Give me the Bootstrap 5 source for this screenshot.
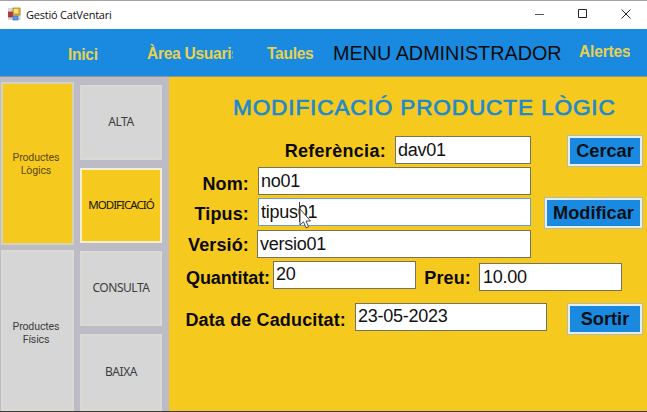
<!DOCTYPE html>
<html lang="ca">
<head>
<meta charset="utf-8">
<meta name="viewport" content="width=device-width, initial-scale=1">
<title>Gestió CatVentari</title>
<link href="https://cdn.jsdelivr.net/npm/bootstrap@5.3.0/dist/css/bootstrap.min.css" rel="stylesheet">
<style>
:root{--blue:#198ae0;--gold:#f6c91f;--side:#bdbbc6;--grey:#d6d6d6}
body{width:647px;height:412px;overflow:hidden;font-family:"Liberation Sans",Arial,sans-serif;background:var(--gold);color:#0b0a08}
.titlebar{height:29px;border-top:1px solid #a5a3a6;background:#fff;font:11px/27px "Open Sans","Noto Sans",sans-serif;color:#111}
.app-name{margin-left:5px;width:200px;letter-spacing:-.22px}
.topmenu{height:48px;background:var(--blue);border-bottom:1px solid #8b9598}
.topmenu a{color:#e6d150;font-weight:700;font-size:15.6px;line-height:20px;letter-spacing:-.3px;text-decoration:none;white-space:nowrap;overflow:hidden}
.m-inici{margin:16px 0 0 68px;width:79px}
.m-area{margin-top:15px;width:86px}
.m-taules{margin:15px 0 0 34px;width:66px}
.m-title{margin-top:12px;width:246px;font-size:19.8px;line-height:24px;white-space:nowrap}
.topmenu .m-alertes{margin-top:13px;letter-spacing:-.2px}
.workspace{height:334px}
.sidebar{width:169px;background:var(--side);padding:5px 0 0 1px}
.side-btn{border:2px solid #dad9d3;border-radius:0;background:var(--grey);color:#3c3c3c;padding:0}
.side-btn.active-tile{background:var(--gold)}
.big-tile{width:73px;font:10.6px/12.5px Roboto,sans-serif;letter-spacing:-.15px;padding:2px 3px 0 0}
.h2t.big-tile{padding-top:6px}
.big-tile.active-tile{color:#5a4a12;border-color:#d5d3b8}
.small-tile{width:82px;font:12px/16px "Noto Sans",sans-serif;letter-spacing:-.45px;padding-bottom:2px}
.small-tile.active-tile{border:2px solid #f4efcf;color:#17140a;font-size:11.5px;letter-spacing:-.95px}
.h1t{height:163px}.h2t{height:161px}.h3t{height:75px}.h4t{height:77px}
.gap-a{margin-top:5px}.gap-b{margin-top:8px}
.tile-col{margin-right:7px;padding-top:3px}
.form-area{width:478px;background:var(--gold)}
.page-title{margin:17px 0 0 64px;height:42px;font-size:22.6px;line-height:27px;letter-spacing:.86px;font-weight:400;color:#2189cb;-webkit-text-stroke:.7px #2189cb;white-space:nowrap}
.frm-row label{font-size:18px;line-height:20px;letter-spacing:.14px;font-weight:700;white-space:nowrap;text-align:right}
.frm-row .l-ref{letter-spacing:.3px}.frm-row .l-q{letter-spacing:-.1px}
.form-control,.form-control:focus{border:1px solid #77725c;border-radius:0;padding:0 0 0 2px;height:28px;font-size:18px;letter-spacing:-.25px;line-height:24px;color:#111;background:#fff;box-shadow:none;flex:none}
.form-control.editing{border-color:#6a9fd0}
.act-btn{height:32px;border-radius:0;border:3px solid #e6eef2;outline:1px solid #b5bba8;outline-offset:-1px;background:var(--blue);font-size:18.2px;font-weight:700;line-height:22px;padding:0;color:#0a1015;width:76px;flex:none}
.act-ref{margin-top:-1px}
.act-wide{width:99px}
.r31{height:31px}.r32{height:32px}.r42{height:42px}
.t5{margin-top:5px}.t6{margin-top:6px}.t7{margin-top:7px}
.l-std{width:80px}.l-ref{width:217px}.l-q{width:101px}.l-p{width:55px}.l-d{width:177px}
.i-ref{width:136px;margin-left:9px}.i-std{width:273px;margin-left:9px}
.i-ver{width:274px;margin-left:8px}.i-q{width:143px;margin-left:3px}.i-p{width:143px;margin:2px 0 0 8px}.i-d{width:192px;margin-left:9px}
.form-control.i-q,.form-control.i-d{padding-bottom:1px}
.form-control.i-p{padding-left:3px}
.caret-mark{left:299px;top:202px;width:1px;height:20px;background:#444}
.pointer{left:299px;top:208px}
.taskline{height:1px;background:#3d3b36}
</style>
<script src="https://cdn.jsdelivr.net/npm/bootstrap@5.3.0/dist/js/bootstrap.bundle.min.js"></script>
</head>
<body class="position-relative">
<header class="titlebar d-flex">
  <svg class="ms-2 flex-shrink-0" width="13" height="20" viewBox="0 -4 13 20">
    <rect x="0" y="3" width="12.500" height="12" fill="#d5d6da"/>
    <rect x="5" y="3" width="7" height="7" fill="#e9b92c" stroke="#a98335" stroke-width=".8"/>
    <rect x="6" y="4" width="4" height="4" fill="#ffe27a"/>
    <rect x=".4" y="7" width="4" height="5" fill="#c5302b" stroke="#8c3a3c" stroke-width=".7"/>
    <rect x="5" y="11" width="5" height="4" fill="#5a9be6" stroke="#3c6fb4" stroke-width=".7"/>
  </svg>
  <span class="app-name">Gestió CatVentari</span>
  <svg class="ms-auto" width="112" height="28" fill="none" stroke="#222" stroke-width="1">
    <path d="M0 13.500h9" stroke="#555"/><path d="M43.500 8.500h8v8h-8z"/><path d="M86.500 8.500l9 9M95.500 8.500l-9 9"/>
  </svg>
</header>
<nav class="topmenu d-flex align-items-start">
  <a class="m-inici" href="#">Inici</a><a class="m-area" href="#">Àrea Usuaris</a><a class="m-taules" href="#">Taules</a>
  <span class="m-title">MENU ADMINISTRADOR</span><a class="m-alertes" href="#">Alertes</a>
</nav>
<main class="workspace d-flex">
  <aside class="sidebar d-flex align-items-start">
    <div class="d-flex flex-column">
      <button class="btn side-btn big-tile h1t active-tile">Productes<br>Lògics</button>
      <button class="btn side-btn big-tile h2t gap-a">Productes<br>Físics</button>
    </div>
    <div class="d-flex flex-column ms-auto tile-col">
      <button class="btn side-btn small-tile h3t">ALTA</button>
      <button class="btn side-btn small-tile h3t gap-b active-tile">MODIFICACIÓ</button>
      <button class="btn side-btn small-tile h3t gap-b">CONSULTA</button>
      <button class="btn side-btn small-tile h4t gap-b">BAIXA</button>
    </div>
  </aside>
  <section class="form-area">
    <h1 class="page-title">MODIFICACIÓ PRODUCTE LÒGIC</h1>
    <form>
      <div class="frm-row r31 d-flex align-items-start">
        <label class="l-ref t5" for="ref">Referència:</label><input id="ref" class="form-control i-ref" value="dav01">
        <button type="button" class="btn act-btn act-ref me-1 ms-auto">Cercar</button>
      </div>
      <div class="frm-row r31 d-flex align-items-start">
        <label class="l-std t7" for="nom">Nom:</label><input id="nom" class="form-control i-std" value="no01">
      </div>
      <div class="frm-row r32 d-flex align-items-start">
        <label class="l-std t6" for="tipus">Tipus:</label><input id="tipus" class="form-control i-std editing" value="tipus01">
        <button type="button" class="btn act-btn act-wide act-ref me-1 ms-auto">Modificar</button>
      </div>
      <div class="frm-row r31 d-flex align-items-start">
        <label class="l-std t5" for="versio">Versió:</label><input id="versio" class="form-control i-ver" value="versio01">
      </div>
      <div class="frm-row r42 d-flex align-items-start">
        <label class="l-q t7" for="quant">Quantitat:</label><input id="quant" class="form-control i-q" value="20">
        <label class="l-p t7" for="preu">Preu:</label><input id="preu" class="form-control i-p" value="10.00">
      </div>
      <div class="frm-row r32 d-flex align-items-start">
        <label class="l-d t7" for="data">Data de Caducitat:</label><input id="data" class="form-control i-d" value="23-05-2023">
        <button type="button" class="btn act-btn me-1 ms-auto">Sortir</button>
      </div>
    </form>
  </section>
</main>
<div class="taskline"></div>
<div class="caret-mark position-absolute"></div>
<svg class="pointer position-absolute" width="14" height="22" viewBox="0 0 14 22"><path d="M1 1v16l3.500-3.200 2.500 6 2.500-1-2.500-5.800h4.500z" fill="#fff" stroke="#333" stroke-width=".9"/></svg>
</body>
</html>
